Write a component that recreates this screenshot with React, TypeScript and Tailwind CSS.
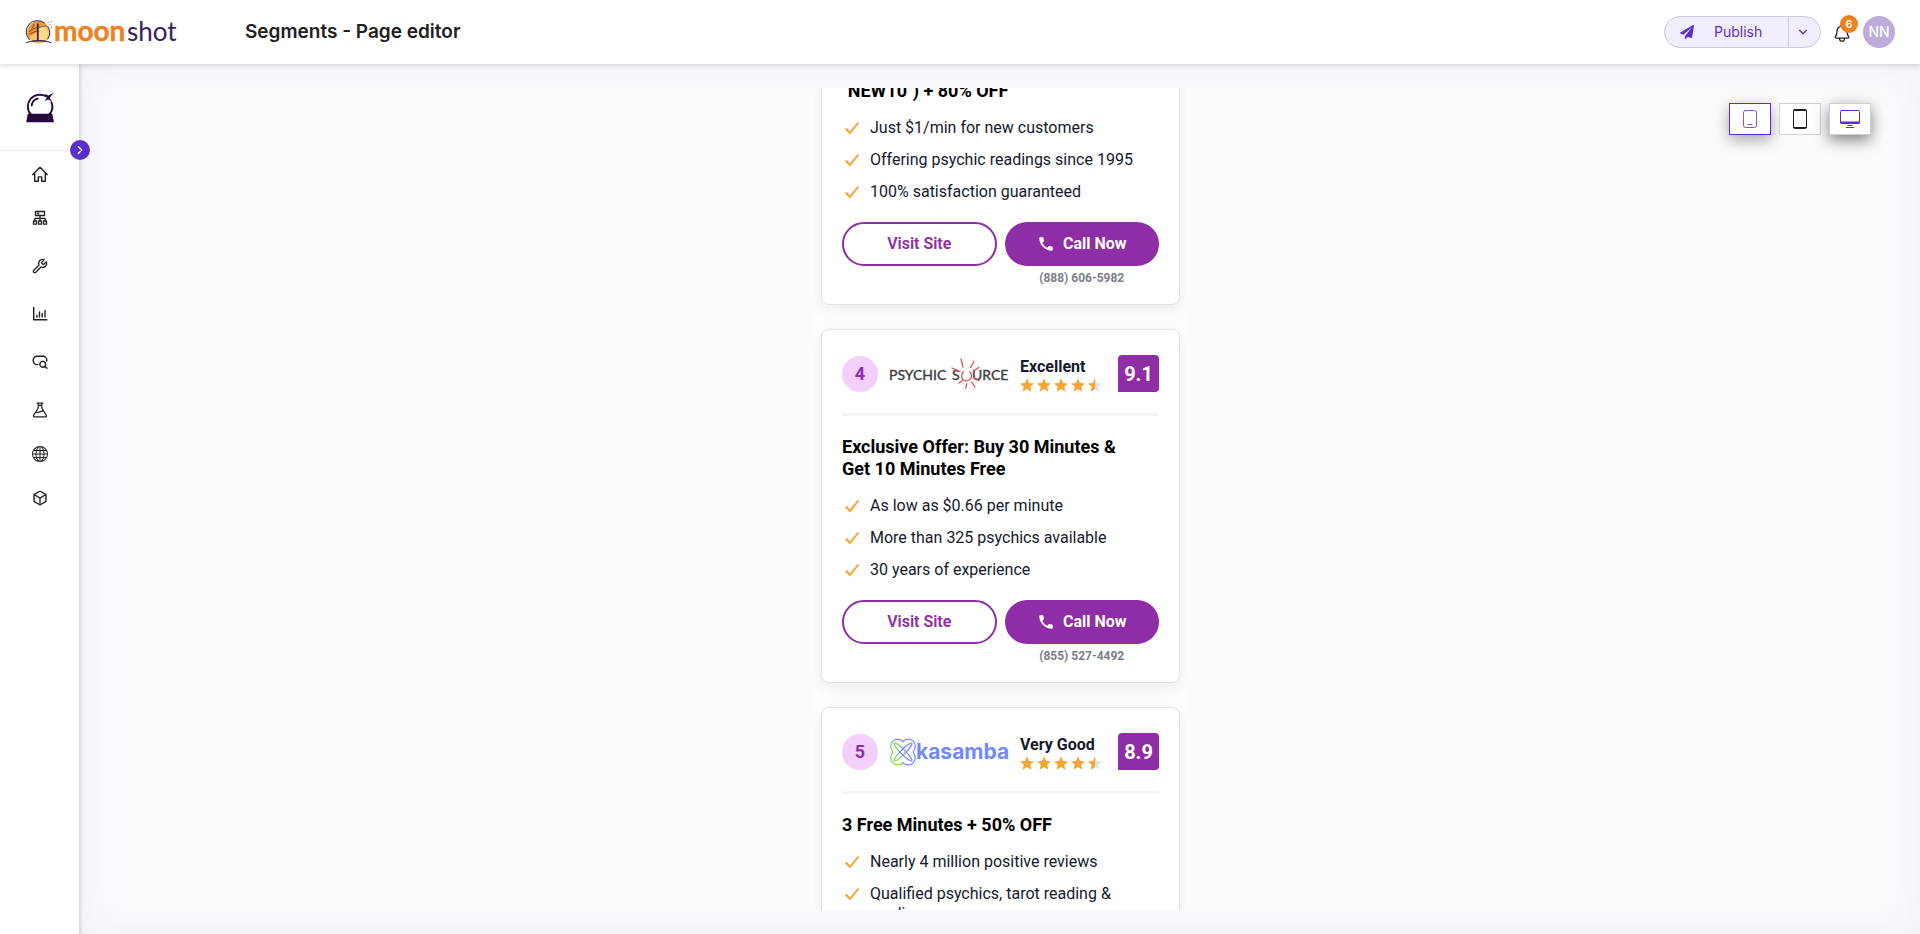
import { IoNotificationsOutline } from "react-icons/io5";
import { FaPaperPlane } from "react-icons/fa";
import { MdCall } from "react-icons/md";
import { BsGlobe } from "react-icons/bs";
import { ChevronDown, ChevronRight, Box, Wrench } from "lucide-react";
import type { ReactNode } from "react";

const line = { fill: "none", stroke: "currentColor", strokeLinecap: "round", strokeLinejoin: "round" } as const;

function HomeIcon() {
  return (
    <svg viewBox="0 0 16 16" className="size-4" {...line} strokeWidth="1.4">
      <path d="M.8 8.600 8 1.200l7.200 7.400M2.700 7.200v8h3.600v-4.300h3.400v4.300h3.600v-8" />
    </svg>
  );
}

function NetworkIcon() {
  return (
    <svg viewBox="0 0 16 16" className="size-4" {...line} strokeWidth="1.3">
      <path d="M3.5 1.5h9v4h-9zM5.5 3.5h1.2M8 5.5v5M2.8 10.5V8.3h10.4v2.2M1.5 11h3v3.2h-3zM6.5 11h3v3.2h-3zM11.5 11h3v3.2h-3z" />
    </svg>
  );
}

function ChartIcon() {
  return (
    <svg viewBox="0 0 16 16" className="size-4" {...line} strokeWidth="1.4">
      <path d="M1.7 1.5v12.3h13.1M4.9 11V9.3M7.5 11V6M10.2 11V7.4M13 11V4.5" />
    </svg>
  );
}

function SearchChatIcon() {
  return (
    <svg viewBox="0 0 16 16" className="size-4" {...line} strokeWidth="1.4">
      <path d="M5.8 10.6H5A3.8 3.8 0 0 1 1.2 6.8v-.7A3.8 3.8 0 0 1 5 2.3h6A3.8 3.8 0 0 1 14.8 6.1v.9" />
      <circle cx="10.7" cy="10.3" r="2.9" />
      <path d="m12.9 12.4 2 1.9" />
    </svg>
  );
}

function FlaskIcon() {
  return (
    <svg viewBox="0 0 16 16" className="size-4" {...line} strokeWidth="1.2">
      <path d="M5 1.2h6M6.2 1.4v4.8L1.6 13.4c-.4.8 0 1.4.8 1.4h11.2c.8 0 1.2-.6.8-1.4L9.8 6.2V1.4M4.1 10.5c2.6.8 4.6-2.4 7.4-1.2M6.4 3.3h3.3" />
    </svg>
  );
}

function MoonLogo() {
  return (
    <svg viewBox="0 0 28 24" className="h-6 w-7 shrink-0">
      <circle cx="13.5" cy="12.5" r="11.2" fill="#fbc566" />
      <path d="M2.5 14C2 7 7 1.5 13.5 1.3c3 0 6 1.2 8 3.6-5 .4-9 3-10 7.6C9 15.5 5 14 4 20z" fill="#f2992e" />
      <path d="M15 6.5c4 0 7 2.5 7.5 7 0 4-2 6-3.500 7h-5z" fill="#fedd86" />
      <g fill="none" stroke="#34205a" strokeWidth="1" strokeLinecap="round">
        <path d="M4.3 19.5A11.200 11.200 0 0 1 19.500 3.100M22.800 6.600a11.200 11.200 0 0 1 0 12.400" />
        <path d="M1.5 22.600c5-2.300 19-2.300 24.500 0M7 21.200c4-.8 9-.8 14 0" />
        <path d="M12.800 4v16.500" strokeWidth="1.700" />
        <path d="M12.500 7.500C10 8 7 9 4.500 11.500M12 11c-3 .5-5 2.500-7.500 3M13.500 7.500c3-.5 5-1.500 8-1.500M9 4.500 7.500 7.500" strokeWidth=".7" />
        <path d="M23 2.200v.2M26.300 1.600v.2M25 4.600v.2M26.600 7v.2" strokeWidth=".8" />
      </g>
    </svg>
  );
}

function CrystalBall() {
  return (
    <svg viewBox="0 0 28 30" className="mt-0.5 h-[30px] w-7" fill="none" stroke="#26063d" strokeLinecap="round">
      <path d="M5 21.500C1 17.500.8 10.500 4.500 6 8.500 1.200 15 .8 20 3.200M25.500 9.500c1.800 4.500.8 8.700-2.300 12" strokeWidth="1.900" />
      <path d="M5.800 12.500c.4-3.500 2.500-6 6-6.800" strokeWidth="1.800" />
      <path d="M1.800 20.800h24.400L28 29.300H.2z" fill="#26063d" stroke="none" />
      <path d="m27.500 0-3.700 4.700 2.500 4.300-4-2.400L18.500 8l2.300-3.300L19 .8l3.300 1.800z" fill="#26063d" stroke="none" />
    </svg>
  );
}

function PsychicSourceLogo() {
  return (
    <svg viewBox="0 0 120 32" className="h-8 w-[120px] overflow-visible" role="img" aria-label="Psychic Source">
      <g fill="#3f3f41" stroke="#3f3f41" strokeWidth=".4" fontFamily="Lato, sans-serif" fontSize="14">
        <text x="0" y="22">PSYCHIC</text>
        <text x="63" y="22">S</text>
        <text x="83" y="22">URCE</text>
      </g>
      <g fill="none" stroke="#e0505c" strokeWidth="1.3" strokeLinecap="round">
        <path d="M74.500 14a5 5 0 1 0 6.200 0" />
        <path d="M72 1l2 8M85 3.300 81.500 9.500M90 9.300l-5.500 4M63 10l8 3.600M70 25l3.500-2.500M76.700 30l1-4M86 29l-3.300-5M90 22.500l-5-2.300" />
      </g>
    </svg>
  );
}

function KasambaLogo() {
  return (
    <svg viewBox="0 0 120 32" className="h-8 w-[120px] overflow-visible" role="img" aria-label="kasamba">
      <defs>
        <linearGradient id="knot" gradientUnits="userSpaceOnUse" x1="2" y1="22" x2="24" y2="12">
          <stop offset="0.25" stopColor="#7cdb52" />
          <stop offset="0.5" stopColor="#7389fb" />
        </linearGradient>
      </defs>
      <g fill="none" stroke="url(#knot)" strokeWidth="1.2">
        <path d="M14 5.500C11 2 5.500 2.500 3.500 5.500 1 8.500 1 12 4 16c-3 4-3 7.500-.5 10.500 2 3 7.500 3.500 10.500 0 3 3.500 8.500 3 10.500 0C27 23.500 27 20 24 16c3-4 3-7.500.5-10.500C22.500 2.500 17 2 14 5.500z" />
        <ellipse cx="14" cy="16" rx="12.500" ry="2.300" transform="rotate(45 14 16)" />
        <ellipse cx="14" cy="16" rx="12.500" ry="2.300" transform="rotate(-45 14 16)" />
      </g>
      <text x="27" y="23" fill="#7389fb" fontFamily="Inter, sans-serif" fontWeight="700" fontSize="21">kasamba</text>
    </svg>
  );
}

function Check() {
  return (
    <svg viewBox="0 0 14 14" className="mt-[3px] ml-[3px] size-3.5 shrink-0" fill="none" stroke="#f5a430" strokeWidth="2">
      <path d="M.8 7.5 5 12 13.400 1.500" />
    </svg>
  );
}

const starPath = "M7 .3 9 5l5 .4-3.800 3.300 1.200 5L7 11l-4.400 2.700 1.200-5L0 5.400 5 5z";

function Stars() {
  return (
    <div className="flex gap-[3px]" role="img" aria-label="4.5 out of 5 stars">
      {[0, 1, 2, 3].map((i) => (
        <svg key={i} viewBox="0 0 14 14" className="size-3.5"><path d={starPath} fill="#f5a430" /></svg>
      ))}
      <svg viewBox="0 0 14 14" className="size-3.5">
        <path d={starPath} fill="#e3e3e6" />
        <path d="M7 .3V11l-4.400 2.700 1.200-5L0 5.400 5 5z" fill="#f5a430" />
      </svg>
    </div>
  );
}

type Offer = {
  rank?: number;
  logo?: ReactNode;
  rating?: string;
  score?: string;
  title: string;
  points: string[];
  phone?: string;
};

const offers: Offer[] = [
  {
    title: "\"NEW10\") + 80% OFF",
    points: ["Just $1/min for new customers", "Offering psychic readings since 1995", "100% satisfaction guaranteed"],
    phone: "(888) 606-5982",
  },
  {
    rank: 4,
    logo: <PsychicSourceLogo />,
    rating: "Excellent",
    score: "9.1",
    title: "Exclusive Offer: Buy 30 Minutes & Get 10 Minutes Free",
    points: ["As low as $0.66 per minute", "More than 325 psychics available", "30 years of experience"],
    phone: "(855) 527-4492",
  },
  {
    rank: 5,
    logo: <KasambaLogo />,
    rating: "Very Good",
    score: "8.9",
    title: "3 Free Minutes + 50% OFF",
    points: ["Nearly 4 million positive reviews", "Qualified psychics, tarot reading & mediums"],
  },
];

function OfferCard({ offer }: { offer: Offer }) {
  return (
    <article className="rounded-lg border border-[#e2e2e4] bg-white px-5 pb-[18px] shadow-[0_4px_14px_rgba(0,0,0,0.08)]">
      {offer.rank && (
        <div className="flex items-center border-b-3 border-[#f5f5f6] pt-[25px] pb-[21px]">
          <div className="flex size-9 items-center justify-center rounded-full bg-[#f2cffc] text-lg font-bold text-[#8e2da5]">
            {offer.rank}
          </div>
          <div className="ml-[11px]">{offer.logo}</div>
          <div className="mt-0.5 ml-[11px] flex flex-col gap-px">
            <p className="text-base leading-5 font-bold text-[#16192c]">{offer.rating}</p>
            <Stars />
          </div>
          <div className="ml-auto flex h-[37px] w-[41px] items-center justify-center rounded-sm rounded-bl-none bg-[#8e2da5] text-xl font-bold text-white">
            {offer.score}
          </div>
        </div>
      )}
      <h2 className="mt-5 pr-6 text-lg leading-[22px] font-bold text-black">{offer.title}</h2>
      <ul className="mt-4 flex flex-col gap-3">
        {offer.points.map((point) => (
          <li key={point} className="flex gap-[11px] text-base leading-5 text-[#16192c]">
            <Check />
            <span>{point}</span>
          </li>
        ))}
      </ul>
      {offer.phone && (
        <div className="mt-5 grid grid-cols-2 gap-2">
          <button className="h-11 rounded-full border-2 border-[#8e2da5] bg-white text-base font-semibold text-[#8e2da5]">Visit Site</button>
          <div>
            <button className="flex h-11 w-full items-center justify-center gap-2 rounded-full bg-[#8e2da5] text-base font-bold text-white">
              <MdCall className="size-[18px]" />
              Call Now
            </button>
            <p className="mt-1 text-center text-xs leading-4 font-bold text-[#7c7e8b]">{offer.phone}</p>
          </div>
        </div>
      )}
    </article>
  );
}

const mainNav: { label: string; icon: ReactNode }[] = [
  { label: "Home", icon: <HomeIcon /> },
  { label: "Sites", icon: <NetworkIcon /> },
];

const groupNav: { label: string; icon: ReactNode }[] = [
  { label: "Tools", icon: <Wrench className="size-4" /> },
  { label: "Reports", icon: <ChartIcon /> },
  { label: "Keywords", icon: <SearchChatIcon /> },
  { label: "Experiments", icon: <FlaskIcon /> },
];

const extraNav: { label: string; icon: ReactNode }[] = [
  { label: "Domains", icon: <BsGlobe className="size-4" /> },
  { label: "Products", icon: <Box className="size-4" /> },
];

function NavLink({ item, className }: { item: { label: string; icon: ReactNode }; className: string }) {
  return (
    <a href="#" aria-label={item.label} className={`flex items-center justify-center ${className}`}>
      {item.icon}
    </a>
  );
}

export default function App() {
  return (
    <div className="flex h-screen flex-col overflow-hidden bg-white font-['Inter',sans-serif] text-[#202020]">
      <header className="relative z-20 flex h-16 shrink-0 items-center bg-white px-[25px] shadow-[0_1px_5px_rgba(0,0,0,0.18)]">
        <a href="#" aria-label="moonshot" className="flex w-[220px] items-center gap-0.5">
          <MoonLogo />
          <svg viewBox="0 0 124 30" className="h-[30px] w-[124px] overflow-visible">
            <text x="-1" y="24" fontFamily="Lato, sans-serif" fontSize="28" fontWeight="700" fill="#ef8220" stroke="#ef8220" strokeWidth=".4">moon</text>
            <text x="72" y="24" fontFamily="Lato, sans-serif" fontSize="26" fill="#3a2160">shot</text>
          </svg>
        </a>
        <h1 className="pt-px text-[19px] font-semibold">Segments - Page editor</h1>
        <div className="ml-auto flex items-center">
          <div className="flex h-8 overflow-hidden rounded-full border border-[#cfc8e3] bg-[#f1edfe] text-[#5a30c8]">
            <button className="flex w-[123px] items-center text-sm">
              <FaPaperPlane className="ml-[15px] size-3.5" />
              <span className="ml-5">Publish</span>
            </button>
            <button aria-label="More publish options" className="flex w-8 items-center justify-center border-l border-[#cfc8e3] pr-1">
              <ChevronDown className="size-3.5" />
            </button>
          </div>
          <button aria-label="Notifications" className="relative ml-[11px] flex w-5 justify-center">
            <IoNotificationsOutline className="mt-0.5 size-5" />
            <span className="absolute -top-1.5 left-2 flex size-[18px] items-center justify-center rounded-full bg-[#ef8220] text-[11px] font-semibold text-white">6</span>
          </button>
          <button className="ml-[11px] flex size-8 items-center justify-center rounded-full bg-[#bcabdb] text-sm font-medium text-white">NN</button>
        </div>
      </header>

      <div className="flex min-h-0 flex-1">
        <aside className="relative z-10 w-20 shrink-0 border-r border-[#dddde0] bg-white shadow-[1px_0_3px_rgba(0,0,0,0.12)]">
          <div className="flex h-[87px] items-center justify-center border-b border-[#ececee]">
            <CrystalBall />
          </div>
          <button aria-label="Expand menu" className="absolute top-[76px] -right-[11px] flex size-5 items-center justify-center rounded-full bg-[#5a30c8] text-white">
            <ChevronRight className="size-3.5" />
          </button>
          <nav className="flex flex-col pt-[3px]">
            {mainNav.map((item) => <NavLink key={item.label} item={item} className="mb-1 h-10" />)}
            {groupNav.map((item) => <NavLink key={item.label} item={item} className="h-12" />)}
            {extraNav.map((item) => <NavLink key={item.label} item={item} className="mb-1 h-10" />)}
          </nav>
        </aside>

        <main className="relative flex flex-1 justify-center bg-[#fcfaff] py-6 pl-px shadow-[inset_0_0_40px_rgba(60,40,110,0.06)]">
          <section className="w-[375px] overflow-hidden bg-[#fdfdfe] px-2 font-['Roboto',sans-serif]">
            <div className="-mt-[29px] flex flex-col gap-6">
              {offers.map((offer) => (
                <OfferCard key={offer.title} offer={offer} />
              ))}
            </div>
          </section>
          <div className="absolute top-[39px] right-[49px] flex gap-2">
            <button aria-label="Mobile" className="flex h-8 w-[42px] items-center justify-center border border-[#5a30c8] bg-white text-[#5a30c8] shadow-[0_5px_15px_rgba(0,0,0,0.35)]">
              <svg viewBox="0 0 14 18" className="h-[18px] w-3.5" {...line}>
                <rect x=".5" y=".5" width="13" height="17" rx="2" strokeWidth=".8" />
                <path d="M5 14.500h4" strokeWidth=".8" />
              </svg>
            </button>
            <button aria-label="Tablet" className="flex h-8 w-[42px] items-center justify-center border border-[#d0d0d4] bg-white">
              <svg viewBox="0 0 14 20" className="h-5 w-3.5" {...line}>
                <rect x=".5" y=".5" width="13" height="19" rx="1" />
                <path d="M1 1.500h12M1 18.500h12" />
              </svg>
            </button>
            <button aria-label="Desktop" className="flex h-8 w-[42px] items-center justify-center border border-[#d0d0d4] bg-white text-[#5a30c8] shadow-[0_5px_15px_rgba(0,0,0,0.5)]">
              <svg viewBox="0 0 20 18" className="h-[18px] w-5" {...line}>
                <rect x=".5" y=".5" width="19" height="13" rx="1" />
                <path d="M1 12.500h18" strokeWidth="2" />
                <path d="M8 15.500h4M6.500 17.500h7" />
              </svg>
            </button>
          </div>
        </main>
      </div>
    </div>
  );
}
